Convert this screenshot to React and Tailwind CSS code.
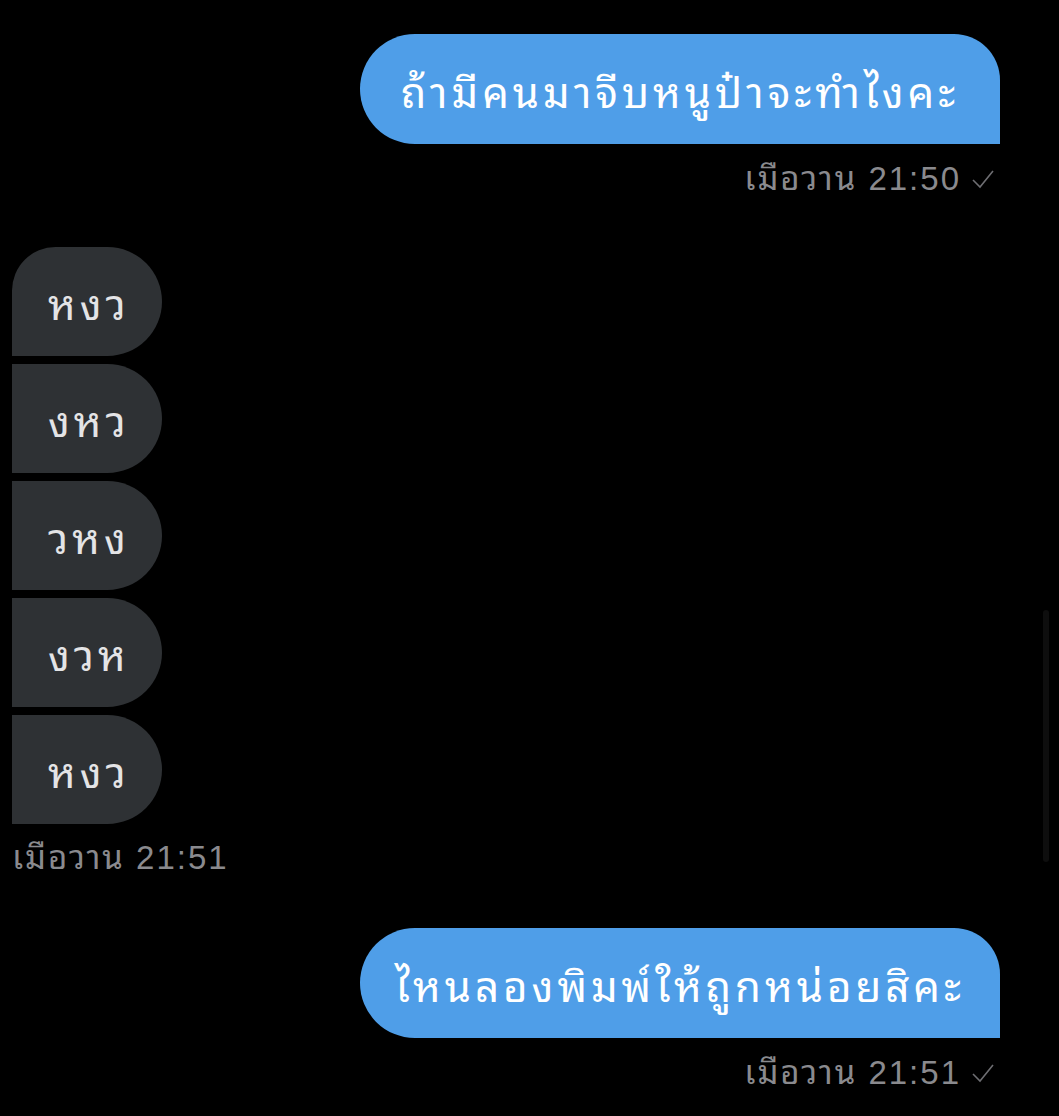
const thai = "font-['Noto_Sans_Thai_Looped','Noto_Sans_Thai','Noto_Sans',sans-serif]";
const stamp = "font-['Liberation_Sans','Noto_Sans_Thai_Looped','Noto_Sans_Thai',sans-serif]";

const incoming = [
  { text: "หงว", shape: "rounded-tl-[44px] rounded-r-[55px]" },
  { text: "งหว", shape: "rounded-r-[55px]" },
  { text: "วหง", shape: "rounded-r-[55px]" },
  { text: "งวห", shape: "rounded-r-[55px]" },
  { text: "หงว", shape: "rounded-r-[55px]" },
];

function Check() {
  return (
    <svg width="24" height="22" viewBox="0 0 24 22" className="ml-[10px] text-[#6e6e72]">
      <path d="M2 12l7 7L22 3" fill="none" stroke="currentColor" strokeWidth="1.6" />
    </svg>
  );
}

function Outgoing({ text, time }) {
  return (
    <div className="flex flex-col items-end pr-[59px]">
      <div className={`flex h-[110px] w-[640px] items-center justify-center rounded-l-[55px] rounded-tr-[46px] bg-[#4f9ee8] text-[42px] tracking-[4px] text-white ${thai}`}>
        {text}
      </div>
      <div className={`mr-[5px] mt-[17px] flex items-center text-[33px] leading-[36px] tracking-[2px] text-[#8a8a8e] ${stamp}`}>
        {time}
        <Check />
      </div>
    </div>
  );
}

export default function App() {
  return (
    <div className="relative min-h-[1116px] w-full overflow-hidden bg-black pt-[34px]">
      <Outgoing text="ถ้ามีคนมาจีบหนูป๋าจะทำไงคะ" time="เมือวาน 21:50" />

      <div className="mt-[50px] flex flex-col items-start gap-[8px] pl-[12px]">
        {incoming.map((m, i) => (
          <div
            key={i}
            className={`flex h-[109px] w-[150px] items-center bg-[#2e3134] pl-[36px] text-[42px] tracking-[4px] text-[#e4e4e6] ${thai} ${m.shape}`}
          >
            {m.text}
          </div>
        ))}
        <div className={`mt-[8px] text-[33px] leading-[36px] tracking-[2px] text-[#8a8a8e] ${stamp}`}>
          เมือวาน 21:51
        </div>
      </div>

      <div className="mt-[52px]">
        <Outgoing text="ไหนลองพิมพ์ให้ถูกหน่อยสิคะ" time="เมือวาน 21:51" />
      </div>

      <div className="absolute right-[10px] top-[610px] h-[252px] w-[6px] rounded-full bg-[#0e0e0e]" />
    </div>
  );
}
